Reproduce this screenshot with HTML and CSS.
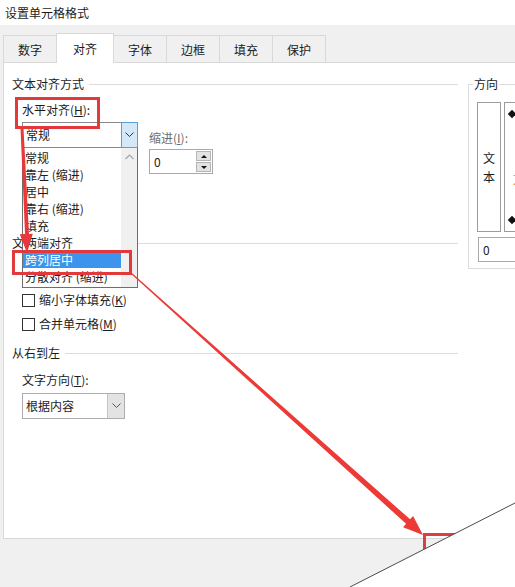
FILE: index.html
```html
<!DOCTYPE html>
<html lang="zh-CN">
<head>
    <meta charset="UTF-8">
    <title>设置单元格格式</title>
    <link rel="stylesheet" href="styles.css">
</head>
<body>
<div class="window">
    <div class="titlebar">设置单元格格式</div>

    <div class="dialog">
        <div class="tabs">
            <div class="tab">数字</div>
            <div class="tab active">对齐</div>
            <div class="tab">字体</div>
            <div class="tab">边框</div>
            <div class="tab">填充</div>
            <div class="tab">保护</div>
        </div>

        <div class="panel">
            <div class="col-left">
                <!-- 文本对齐方式 -->
                <div class="group">
                    <div class="group-head"><span>文本对齐方式</span><i class="rule"></i></div>
                    <div class="group-body">
                        <div class="field-label first">水平对齐(<u>H</u>):</div>
                        <div class="align-row">
                            <div class="combo-wrap">
                                <div class="combo open">
                                    <span class="combo-text">常规</span>
                                    <span class="combo-btn">
                                        <svg width="9" height="6" viewBox="0 0 9 6"><polyline points="0.5,0.5 4.5,4.5 8.5,0.5" fill="none" stroke="#333" stroke-width="1"/></svg>
                                    </span>
                                </div>
                                <div class="droplist">
                                    <ul class="items">
                                        <li>常规</li>
                                        <li>靠左 (缩进)</li>
                                        <li>居中</li>
                                        <li>靠右 (缩进)</li>
                                        <li>填充</li>
                                        <li>两端对齐</li>
                                        <li class="selected">跨列居中</li>
                                        <li>分散对齐 (缩进)</li>
                                    </ul>
                                    <div class="scrollbar">
                                        <span class="scroll-up">
                                            <svg width="9" height="6" viewBox="0 0 9 6"><polyline points="0.5,5 4.5,1 8.5,5" fill="none" stroke="#a6a6a6" stroke-width="1.2"/></svg>
                                        </span>
                                    </div>
                                </div>
                            </div>
                            <div class="indent">
                                <div class="field-label muted">缩进(<u>I</u>):</div>
                                <div class="spinner">
                                    <span class="spin-value">0</span>
                                    <span class="spin-btns">
                                        <b class="spin-up"></b>
                                        <b class="spin-down"></b>
                                    </span>
                                </div>
                            </div>
                        </div>
                        <!-- vertical alignment row, hidden under the open list -->
                        <div class="vert-slot"></div>
                    </div>
                </div>

                <!-- 文本控制 -->
                <div class="group">
                    <div class="group-head"><span>文本控制</span><i class="rule"></i></div>
                    <div class="group-body checks">
                        <div class="check"></div>
                        <label class="check"><span class="box"></span>缩小字体填充(<u>K</u>)</label>
                        <label class="check"><span class="box"></span>合并单元格(<u>M</u>)</label>
                    </div>
                </div>

                <!-- 从右到左 -->
                <div class="group">
                    <div class="group-head"><span>从右到左</span><i class="rule"></i></div>
                    <div class="group-body">
                        <div class="field-label dir">文字方向(<u>T</u>):</div>
                        <div class="combo short">
                            <span class="combo-text">根据内容</span>
                            <span class="combo-btn grey">
                                <svg width="9" height="6" viewBox="0 0 9 6"><polyline points="0.5,0.5 4.5,4.5 8.5,0.5" fill="none" stroke="#555" stroke-width="1"/></svg>
                            </span>
                        </div>
                    </div>
                </div>
            </div>

            <fieldset class="orient">
                <legend>方向</legend>
                <div class="orient-row">
                    <div class="vtext"><span>文</span><span>本</span></div>
                    <div class="dial">
                        <i class="knob top"></i>
                        <span class="needle-text">文</span>
                        <i class="knob bottom"></i>
                    </div>
                </div>
                <div class="degrees">0</div>
            </fieldset>
        </div>
    </div>

    <!-- annotations drawn over the screenshot -->
    <svg class="marks" width="515" height="587" viewBox="0 0 515 587">
        <rect x="16.5" y="98.5" width="82" height="29" fill="none" stroke="#e23a3c" stroke-width="3"/>
        <rect x="13.5" y="251.5" width="117" height="22" fill="none" stroke="#e23a3c" stroke-width="3"/>
        <polygon points="23.5,128 29,233.9 32.8,233.8 27,253 19.8,234.2 25,234.1 20.5,128" fill="#e8383a"/>
        <path d="M424.5 552 V534.5 H460" fill="none" stroke="#d9413f" stroke-width="3"/>
        <polygon points="131.4,272.55 410.1,519.37 413.1,516.02 423,535 403.1,527.18 406.1,523.83 130.6,273.45" fill="#ec3a36"/>
        <polygon points="350,587 515,503 515,587" fill="#ffffff"/>
        <line x1="350" y1="587" x2="515" y2="503" stroke="#4a4a4a" stroke-width="1"/>
    </svg>
</div>
</body>
</html>
```

FILE: styles.css
```css
* {
    box-sizing: border-box;
}

body {
    margin: 0;
    width: 515px;
    height: 587px;
    overflow: hidden;
    background: #ffffff;
    color: #1c1c1c;
    font: 12px/16px "Noto Sans CJK SC", "Noto Sans", sans-serif;
}

.window {
    position: relative;
    height: 587px;
    display: flex;
    flex-direction: column;
}

.titlebar {
    height: 25px;
    line-height: 25px;
    padding-left: 5px;
    background: #ffffff;
}

.dialog {
    flex: 1;
    background: #f0f0f0;
    padding-top: 8px;
}

/* tab strip */
.tabs {
    display: flex;
    align-items: flex-end;
    height: 29px;
    padding-left: 3px;
}

.tab {
    height: 27px;
    line-height: 27px;
    padding: 0 14px;
    margin-right: -1px;
    border: 1px solid #d9d9d9;
    border-bottom: none;
    background: #f0f0f0;
}

.tab.active {
    position: relative;
    z-index: 1;
    height: 30px;
    line-height: 29px;
    padding: 0 16px;
    margin-bottom: -1px;
    background: #ffffff;
}

/* white page */
.panel {
    height: 477px;
    margin-left: 3px;
    padding-top: 13px;
    display: flex;
    gap: 10px;
    background: #ffffff;
    border: 1px solid #d9d9d9;
    border-right: none;
    overflow: hidden;
}

.col-left {
    width: 454px;
    flex-shrink: 0;
    padding-left: 8px;
}

.group + .group {
    margin-top: 9px;
}

.group-head {
    display: flex;
    align-items: center;
    height: 16px;
}

.group-head .rule {
    flex: 1;
    height: 1px;
    margin-left: 5px;
    background: #dcdcdc;
}

.group-body {
    padding-left: 10px;
}

.field-label {
    margin-top: 6px;
    height: 16px;
}

.field-label.first {
    margin-top: 10px;
}

.field-label.dir {
    margin-top: 11px;
}

.field-label.muted {
    margin-top: 0;
    color: #6d6d6d;
}

/* combo boxes */
.combo {
    display: flex;
    width: 116px;
    height: 26px;
    margin-top: 4px;
    background: #ffffff;
    border: 1px solid #adadad;
}

.combo.short {
    width: 103px;
    margin-top: 5px;
}

.combo-text {
    flex: 1;
    padding-left: 3px;
    line-height: 24px;
}

.combo-btn {
    width: 17px;
    display: flex;
    align-items: center;
    justify-content: center;
}

.combo-btn.grey {
    background: #e3e3e3;
    border-left: 1px solid #c4c4c4;
}

.combo.open {
    border-color: #8a8a8a;
    margin-top: 0;
}

.combo.open .combo-btn {
    margin: -1px -1px -1px 0;
    width: 17px;
    background: #d5e8f8;
    border: 1px solid #5a9fd8;
}

.align-row {
    display: flex;
    margin-top: 4px;
    height: 52px;
}

.vert-slot {
    height: 52px;
}

.combo-wrap {
    position: relative;
    width: 116px;
}

/* open drop-down list */
.droplist {
    position: absolute;
    z-index: 5;
    top: 26px;
    left: 0;
    width: 116px;
    height: 140px;
    display: flex;
    background: #ffffff;
    border: 1px solid #6e6e6e;
    border-top: none;
}

.items {
    flex: 1;
    margin: 0;
    padding: 1px 0 0;
    list-style: none;
}

.items li {
    height: 17px;
    line-height: 17px;
    padding-left: 2px;
    white-space: nowrap;
}

.items li.selected {
    background: #3c94ec;
    color: #ffffff;
}

.scrollbar {
    width: 16px;
    background: #f0f0f0;
}

.scroll-up {
    height: 18px;
    display: flex;
    align-items: center;
    justify-content: center;
}

/* indent spinner */
.indent {
    margin-left: 11px;
    padding-top: 8px;
}

.spinner {
    display: flex;
    width: 64px;
    height: 25px;
    margin-top: 3px;
    border: 1px solid #a9a9a9;
    background: #ffffff;
}

.spin-value {
    flex: 1;
    padding-left: 4px;
    line-height: 23px;
}

.spin-btns {
    width: 16px;
    padding: 1px 1px 1px 0;
    display: flex;
    flex-direction: column;
    gap: 1px;
}

.spin-btns b {
    flex: 1;
    display: flex;
    align-items: center;
    justify-content: center;
    background: #e3e3e3;
    border: 1px solid #b5b5b5;
}

.spin-up::after,
.spin-down::after {
    content: "";
    border-left: 3px solid transparent;
    border-right: 3px solid transparent;
}

.spin-up::after {
    border-bottom: 3px solid #111;
}

.spin-down::after {
    border-top: 3px solid #111;
}

/* check boxes */
.checks {
    padding-top: 13px;
}

.check {
    display: flex;
    align-items: center;
    height: 24px;
}

.check .box {
    width: 13px;
    height: 13px;
    margin-right: 4px;
    border: 1px solid #333;
    background: #ffffff;
}

/* orientation */
.orient {
    flex-shrink: 0;
    width: 200px;
    height: 193px;
    margin: 0;
    padding: 0 0 0 8px;
    border: 1px solid #dcdcdc;
}

.orient legend {
    padding: 0 1px;
    margin-left: -4px;
    line-height: 16px;
}

.orient-row {
    display: flex;
    gap: 3px;
    margin-top: 10px;
}

.vtext {
    width: 24px;
    height: 130px;
    display: flex;
    flex-direction: column;
    align-items: center;
    justify-content: center;
    line-height: 19px;
    border: 1px solid #9c9c9c;
}

.dial {
    position: relative;
    width: 150px;
    height: 130px;
    border: 1px solid #9c9c9c;
}

.knob {
    position: absolute;
    left: 4px;
    width: 6px;
    height: 6px;
    background: #111;
    transform: rotate(45deg);
}

.knob.top {
    top: 8px;
}

.knob.bottom {
    top: 114px;
}

.needle-text {
    position: absolute;
    left: 8px;
    top: 68px;
    color: #d98a1c;
}

.degrees {
    width: 100px;
    height: 25px;
    margin: 5px 0 0 1px;
    padding-left: 4px;
    line-height: 23px;
    border: 1px solid #a9a9a9;
}

.marks {
    position: absolute;
    top: 0;
    left: 0;
    z-index: 10;
    pointer-events: none;
}
```
